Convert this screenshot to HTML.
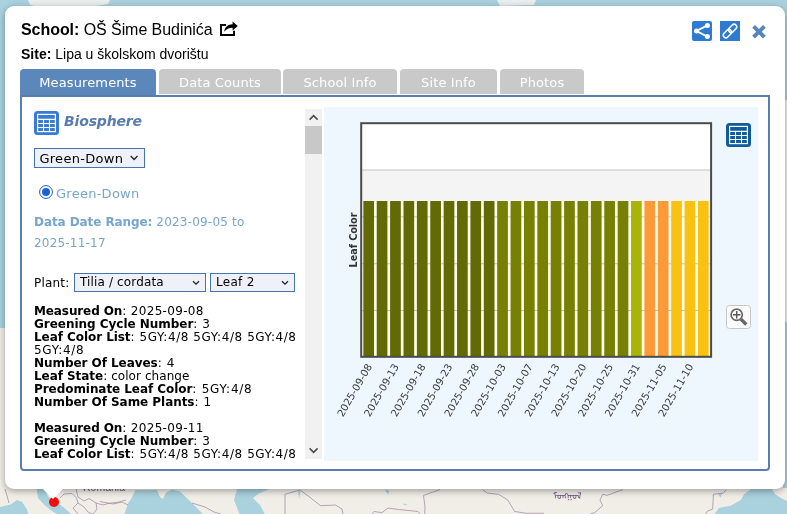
<!DOCTYPE html>
<html lang="hr">
<head>
<meta charset="utf-8">
<title>GLOBE Visualization - OŠ Šime Budinića</title>
<style>
  html, body { margin: 0; padding: 0; }
  body {
    width: 787px; height: 514px; overflow: hidden; position: relative;
    background: #f1eee8;
    font-family: "DejaVu Sans", "Liberation Sans", sans-serif;
  }
  .abs { position: absolute; }
  body > div, body > svg { will-change: transform; }
  #map { position: absolute; left: 0; top: 0; width: 787px; height: 514px; }
  #popup {
    position: absolute; left: 5px; top: 6px; width: 780px; height: 483px;
    background: #fff; border-radius: 9px;
    box-shadow: 0 2px 7px rgba(0,0,0,0.35);
  }
  #tail {
    position: absolute; left: 43px; top: 488.5px; width: 0; height: 0;
    border-left: 10.5px solid transparent; border-right: 10.5px solid transparent;
    border-top: 10.8px solid #fff;
  }
  #dot {
    position: absolute; left: 48.7px; top: 497.2px; width: 10px; height: 10px;
    border-radius: 50%; background: #f40d0d;
  }
  #school {
    position: absolute; left: 21px; top: 21px; white-space: nowrap;
    font: 16px/18px "Liberation Sans", sans-serif; color: #000; letter-spacing: -0.06px;
  }
  #site {
    position: absolute; left: 21px; top: 46px; white-space: nowrap;
    font: 14px/16px "Liberation Sans", sans-serif; color: #000;
  }
  .tab {
    position: absolute; top: 69px; height: 25px; border-radius: 4px 4px 0 0; letter-spacing: 0.12px;
    background: #c9c9c9; color: #fff; text-align: center;
    font: 13px/27px "DejaVu Sans", sans-serif;
  }
  .tab.active { background: #5b87ba; height: 27px; }
  #panel {
    position: absolute; left: 20px; top: 95px; width: 746px; height: 372px;
    border: 2px solid #5a7dab; border-radius: 0 0 4px 4px; background: #fff;
  }
  #scroller {
    position: absolute; left: 28px; top: 109px; width: 277px; height: 350px;
    overflow: hidden; color: #000;
    font: 13px/13px "DejaVu Sans", sans-serif;
  }
  #sbar { position: absolute; left: 305px; top: 109px; width: 17px; height: 350px; background: #f1f1f1; }
  #thumb { position: absolute; left: 305px; top: 126px; width: 17px; height: 28px; background: #c8c8c8; }
  #chartbg { position: absolute; left: 324px; top: 107px; width: 434px; height: 354px; background: #eef6fe; }
  .sel {
    position: absolute; box-sizing: border-box; height: 20px;
    border: 1px solid #4674ad; background: #eef2f8; color: #000;
    font: 13px/18px "DejaVu Sans", sans-serif; padding-left: 4px; white-space: nowrap;
  }
  .blue { color: #78a5cf; }
  .t12 { font: 12px/13px "DejaVu Sans", sans-serif; letter-spacing: 0.2px; }
  .t12 b { font-weight: bold; letter-spacing: -0.08px; }
</style>
</head>
<body>

<svg id="map" viewBox="0 0 787 514">
  <rect x="0" y="0" width="787" height="514" fill="#f1eee8"/>
  <!-- top strip water -->
  <rect x="0" y="0" width="787" height="12" fill="#a9d1de"/>
  <rect x="0" y="0" width="8" height="328" fill="#a9d1de"/>
  <rect x="783" y="0" width="4" height="100" fill="#a9d1de"/>
  <rect x="783" y="103" width="4" height="219" fill="#eeeeec"/>
  <rect x="783" y="322" width="4" height="166" fill="#a9d1de"/>
  <path d="M28 0 L110 0 L108 4 L90 7 L40 7 L30 5 Z" fill="#e9eeee"/>
  <path d="M497 0 L536 0 L534 5 L500 6 Z" fill="#e9eeee"/>
  <!-- Tyrrhenian / Ligurian -->
  <path d="M0 507 L10.7 504.5 L17 500 L22 501.8 L26.7 509 L28.5 514 L0 514 Z" fill="#a9d1de"/>
  <!-- Adriatic -->
  <path d="M36.5 489 L44.5 489 L48 496.5 L58.7 503.6 L67.6 510.7 L71 514 L57 514 L51.6 510.7 L44.5 505 L38 498 Z" fill="#a9d1de"/>
  <!-- Black sea -->
  <path d="M124.5 514 L128 503.6 L131.7 498 L135.5 490 L157 490 L160 497 L163 499 L166 492.5 L172 489.5 L180 491.4 L192 503 L203 514 Z" fill="#a9d1de"/>
  <!-- Caspian -->
  <path d="M237 489 L234 500 L239.5 514 L264.7 514 L260 505 L253 498 L258 494 L269 489 Z" fill="#a9d1de"/>
  <!-- small lakes -->
  <path d="M298 491.5 L300.4 490.6 L299.2 499 Z" fill="#a9d1de"/>
  <path d="M384.6 489.8 L389.4 490.4 L388.2 494.4 Z" fill="#a9d1de"/>
  <path d="M403 503.4 L408 504.4 L404 505.2 Z" fill="#a9d1de"/>
  <path d="M718 493 L722.5 493 L720.3 497.7 Z" fill="#a9d1de"/>
  <!-- far east sea -->
  <path d="M751 489 L744 494.3 L740.8 500 L730.5 505.7 L719 508 L714.5 514 L787 514 L787 501 L781 498 L775 494 L771.7 489 Z" fill="#a9d1de"/>
  <!-- borders -->
  <g fill="none" stroke="#a48fa6" stroke-width="0.8" stroke-linejoin="round">
    <path d="M5 489 L7.6 498 L9 503"/>
    <path d="M60 498 L64 494 L72 493.5 L76.5 498 L78 503 L73 508 L78 514"/>
    <path d="M76 489 L78 497 L84 501 L89 498.5 L96 503 L103 505 L108 503.5 L119 502 L126 500"/>
    <path d="M78 503 L84 507 L88 512 L92 514"/>
    <path d="M96 503 L97 509 L93 514"/>
    <path d="M100 501.5 L113 504 L122 502 L128 505"/>
    <path d="M192 503 L205 507 L214 512 L221 514"/>
    <path d="M285 514 L285 494.3 L300 490 L309 496.6 L320.6 505.7 L335.5 505 L342 509 L343 514"/>
    <path d="M372 514 L374 511.5 L382 512.6 L388 508 L399.5 509.6 L418 511.5 L420 514"/>
    <path d="M440 489.7 L423.5 495.4 L425 507 L424.7 514"/>
    <path d="M482.6 489.7 L487 493 L498.6 494.3 L507.8 500 L514.6 511.4 L526 513.3 L544 513.3"/>
    <path d="M623 489.7 L616 492 L607 495.4 L602.7 494.3 L600 500 L602.7 505.7 L594.7 512.6 L590 514"/>
    <path d="M726 489.7 L723.6 493 L713.4 494.3 L712.7 509 L707.6 511 L705.4 514"/>
  </g>
  <text x="83" y="491.2" font-family="Liberation Sans, sans-serif" font-size="10.5" fill="#6b5a75">România</text>
  <text x="553" y="498.5" font-family="Noto Sans Mongolian, DejaVu Sans, sans-serif" font-size="9" fill="#6a4f7a">ᠮᠣᠩᠭᠣᠯ</text>
</svg>

<div id="popup"></div>
<div id="dot"></div>
<div id="tail"></div>

<div id="school"><b>School:</b> OŠ Šime Budinića</div>
<svg class="abs" style="left:219px;top:20px" width="20" height="18" viewBox="0 0 20 18">
  <path d="M15.05 10.7 V15 H2 V5 H7.1" fill="none" stroke="#000" stroke-width="1.9"/>
  <path d="M5.3 11.8 C5.5 7.3 8.6 4.5 13.6 4.3 V1.6 L18.8 6 L13.6 10.4 V7.8 C10 7.8 7.3 8.9 5.3 11.8 Z" fill="#000"/>
</svg>
<div id="site"><b>Site:</b> Lipa u školskom dvorištu</div>

<!-- header icons -->
<svg class="abs" style="left:692px;top:21px" width="20" height="20" viewBox="0 0 20 20">
  <rect x="0" y="0" width="20" height="20" rx="2" fill="#2d7ad3"/>
  <path d="M15.4 4.4 L4.5 10 L15.4 15.6" fill="none" stroke="#fff" stroke-width="1.9"/>
  <circle cx="15.4" cy="4.4" r="2.5" fill="#fff"/>
  <circle cx="4.5" cy="10" r="2.5" fill="#fff"/>
  <circle cx="15.4" cy="15.6" r="2.5" fill="#fff"/>
</svg>
<svg class="abs" style="left:720px;top:21px" width="20" height="20" viewBox="0 0 20 20">
  <rect x="0" y="0" width="20" height="20" fill="#2d7ad3"/>
  <g transform="rotate(-45 10 10)" fill="none" stroke="#fff" stroke-width="1.5">
    <rect x="1.6" y="7.4" width="9.4" height="5.2" rx="2.6"/>
    <rect x="9" y="7.4" width="9.4" height="5.2" rx="2.6"/>
  </g>
</svg>
<svg class="abs" style="left:751px;top:24px" width="16" height="16" viewBox="0 0 16 16">
  <path d="M2.6 2.4 L13.4 13.2 M13.4 2.4 L2.6 13.2" stroke="#5585bc" stroke-width="3.9" fill="none"/>
</svg>

<!-- tabs -->
<div class="tab active" style="left:20px;width:136px">Measurements</div>
<div class="tab" style="left:159px;width:122px">Data Counts</div>
<div class="tab" style="left:283px;width:114px">School Info</div>
<div class="tab" style="left:400px;width:97px">Site Info</div>
<div class="tab" style="left:500px;width:84px">Photos</div>

<div id="panel"></div>
<div id="chartbg"></div>
<div id="sbar"></div>
<div id="thumb"></div>
<svg class="abs" style="left:305px;top:109px" width="17" height="17" viewBox="0 0 17 17">
  <path d="M4.6 10.6 L8.6 6.6 L12.6 10.6" fill="none" stroke="#4d4d4d" stroke-width="1.6"/>
</svg>
<svg class="abs" style="left:305px;top:442px" width="17" height="17" viewBox="0 0 17 17">
  <path d="M4.6 6.4 L8.6 10.4 L12.6 6.4" fill="none" stroke="#4d4d4d" stroke-width="1.6"/>
</svg>

<!-- left content -->
<svg class="abs" style="left:34px;top:111px" width="25" height="24" viewBox="0 0 25 24">
  <rect x="0" y="0" width="25" height="24" rx="3.5" fill="#3a7bd3"/>
  <rect x="3.6" y="3.4" width="17.8" height="17.2" fill="none" stroke="#fff" stroke-width="1.2"/>
  <g stroke="#fff" stroke-width="1.1">
    <path d="M3.6 8.4 H21.4 M3.6 12.5 H21.4 M3.6 16.5 H21.4"/>
    <path d="M9.5 8.4 V20.6 M15.5 8.4 V20.6"/>
  </g>
</svg>
<div class="abs" style="left:64px;top:111px;font:italic bold 14px/20px 'DejaVu Sans',sans-serif;letter-spacing:-0.15px;color:#5a7bb0;white-space:nowrap">Biosphere</div>

<div class="sel" style="left:34px;top:148px;width:111px;padding-left:4.4px;line-height:20px;letter-spacing:0.3px">Green-Down</div>
<svg class="abs" style="left:128px;top:153px" width="12" height="10" viewBox="0 0 12 10">
  <path d="M2.7 3.1 L6.1 6.5 L9.5 3.1" fill="none" stroke="#222" stroke-width="1.35"/>
</svg>

<svg class="abs" style="left:38px;top:184px" width="16" height="16" viewBox="0 0 16 16">
  <circle cx="8" cy="8" r="6.4" fill="#fff" stroke="#1d58c4" stroke-width="1"/>
  <circle cx="8" cy="8" r="4" fill="#1a60d2"/>
</svg>
<div class="abs blue" style="left:56px;top:185.5px;letter-spacing:0.26px;font:13px/16px 'DejaVu Sans',sans-serif;white-space:nowrap">Green-Down</div>

<div class="abs blue t12" style="left:34px;top:212px;width:260px;line-height:21px"><b>Data Date Range:</b> 2023-09-05 to<br>2025-11-17</div>

<div class="abs t12" style="left:34px;top:274px;line-height:18px;white-space:nowrap">Plant:</div>
<div class="sel" style="left:74px;top:273px;width:132px;height:19px;line-height:17.6px;font-size:12px;padding-left:5px;letter-spacing:0.14px">Tilia / cordata</div>
<svg class="abs" style="left:190.2px;top:277.6px" width="12" height="10" viewBox="0 0 12 10">
  <path d="M3 3.2 L6 6.2 L9 3.2" fill="none" stroke="#222" stroke-width="1.3"/>
</svg>
<div class="sel" style="left:210px;top:273px;width:85px;height:19px;line-height:17.6px;font-size:12px;padding-left:5px;letter-spacing:0.3px">Leaf 2</div>
<svg class="abs" style="left:279px;top:277.6px" width="12" height="10" viewBox="0 0 12 10">
  <path d="M3 3.2 L6 6.2 L9 3.2" fill="none" stroke="#222" stroke-width="1.3"/>
</svg>

<div class="abs d t12" style="left:34px;top:305px;width:272px;line-height:13px;color:#000;white-space:pre"><b style="letter-spacing:-0.11px">Measured On</b><span style="letter-spacing:0.33px">: 2025-09-08</span><br><b style="letter-spacing:-0.03px">Greening Cycle Number</b><span style="letter-spacing:0.6px">: 3</span><br><b style="letter-spacing:-0.06px">Leaf Color List</b><span style="letter-spacing:0.57px">: 5GY:4/8 5GY:4/8 5GY:4/8</span><br><span style="letter-spacing:0.72px">5GY:4/8</span><br><b style="letter-spacing:-0.05px">Number Of Leaves</b><span style="letter-spacing:0.6px">: 4</span><br><b style="letter-spacing:-0.05px">Leaf State</b><span style="letter-spacing:0.07px">: color change</span><br><b style="letter-spacing:-0.06px">Predominate Leaf Color</b><span style="letter-spacing:0.77px">: 5GY:4/8</span><br><b style="letter-spacing:-0.05px">Number Of Same Plants</b><span style="letter-spacing:0.6px">: 1</span><br><br><b style="letter-spacing:-0.11px">Measured On</b><span style="letter-spacing:0.33px">: 2025-09-11</span><br><b style="letter-spacing:-0.03px">Greening Cycle Number</b><span style="letter-spacing:0.6px">: 3</span><br><b style="letter-spacing:-0.06px">Leaf Color List</b><span style="letter-spacing:0.57px">: 5GY:4/8 5GY:4/8 5GY:4/8</span></div>


<!-- chart side buttons -->
<svg class="abs" style="left:726px;top:123px" width="25" height="24" viewBox="0 0 25 24">
  <rect x="0" y="0" width="25" height="24" rx="3.5" fill="#0f5b9b"/>
  <rect x="3.6" y="3.4" width="17.8" height="17.2" fill="none" stroke="#fff" stroke-width="1.2"/>
  <g stroke="#fff" stroke-width="1.1">
    <path d="M3.6 8.4 H21.4 M3.6 12.5 H21.4 M3.6 16.5 H21.4"/>
    <path d="M9.5 8.4 V20.6 M15.5 8.4 V20.6"/>
  </g>
</svg>
<svg class="abs" style="left:726px;top:305px" width="25" height="24" viewBox="0 0 25 24">
  <rect x="0.5" y="0.5" width="24" height="23" rx="3" fill="#fbfbfb" stroke="#c6c6c6" stroke-width="1"/>
  <circle cx="10.7" cy="9.8" r="5.6" fill="none" stroke="#666" stroke-width="1.7"/>
  <path d="M7 9.8 H14.4 M10.7 6.1 V13.5" stroke="#555" stroke-width="1.4"/>
  <path d="M14.9 14.1 L20.3 19.5" stroke="#666" stroke-width="3.4"/>
</svg>

<!-- chart -->
<svg class="abs" id="chart" style="left:324px;top:107px" width="434" height="354" viewBox="324 107 434 354">
  <rect x="361.2" y="123.2" width="349.90" height="233.60" fill="#ffffff"/>
  <rect x="361.2" y="170.04" width="349.90" height="46.84" fill="#f4f4f4"/>
  <path d="M361.2 170.04 H711.1" stroke="#c4c4c4" stroke-width="1"/>
  <rect x="361.2" y="201.0" width="349.90" height="155.80" fill="#fffff0"/>
  <rect x="361.2" y="263.72" width="349.90" height="46.84" fill="#fff9ea"/>
  <path d="M361.2 216.88 H711.1" stroke="#c9c4b0" stroke-width="1"/>
  <path d="M361.2 263.72 H711.1" stroke="#c9c4b0" stroke-width="1"/>
  <path d="M361.2 310.56 H711.1" stroke="#c9c4b0" stroke-width="1"/>
  <rect x="363.34" y="201.0" width="10.71" height="155.80" fill="#626a06"/>
  <rect x="376.72" y="201.0" width="10.71" height="155.80" fill="#626a06"/>
  <rect x="390.11" y="201.0" width="10.71" height="155.80" fill="#626a06"/>
  <rect x="403.49" y="201.0" width="10.71" height="155.80" fill="#626a06"/>
  <rect x="416.88" y="201.0" width="10.71" height="155.80" fill="#626a06"/>
  <rect x="430.26" y="201.0" width="10.71" height="155.80" fill="#626a06"/>
  <rect x="443.65" y="201.0" width="10.71" height="155.80" fill="#626a06"/>
  <rect x="457.03" y="201.0" width="10.71" height="155.80" fill="#626a06"/>
  <rect x="470.42" y="201.0" width="10.71" height="155.80" fill="#626a06"/>
  <rect x="483.80" y="201.0" width="10.71" height="155.80" fill="#626a06"/>
  <rect x="497.18" y="201.0" width="10.71" height="155.80" fill="#788004"/>
  <rect x="510.57" y="201.0" width="10.71" height="155.80" fill="#788004"/>
  <rect x="523.95" y="201.0" width="10.71" height="155.80" fill="#788004"/>
  <rect x="537.34" y="201.0" width="10.71" height="155.80" fill="#788004"/>
  <rect x="550.72" y="201.0" width="10.71" height="155.80" fill="#788004"/>
  <rect x="564.11" y="201.0" width="10.71" height="155.80" fill="#788004"/>
  <rect x="577.49" y="201.0" width="10.71" height="155.80" fill="#788004"/>
  <rect x="590.88" y="201.0" width="10.71" height="155.80" fill="#788004"/>
  <rect x="604.26" y="201.0" width="10.71" height="155.80" fill="#788004"/>
  <rect x="617.65" y="201.0" width="10.71" height="155.80" fill="#788004"/>
  <rect x="631.03" y="201.0" width="10.71" height="155.80" fill="#a8b508"/>
  <rect x="644.42" y="201.0" width="10.71" height="155.80" fill="#fb9a36"/>
  <rect x="657.80" y="201.0" width="10.71" height="155.80" fill="#fb9a36"/>
  <rect x="671.18" y="201.0" width="10.71" height="155.80" fill="#f9c112"/>
  <rect x="684.57" y="201.0" width="10.71" height="155.80" fill="#f9c112"/>
  <rect x="697.95" y="201.0" width="10.71" height="155.80" fill="#f9c112"/>
  <rect x="361.2" y="123.2" width="349.90" height="233.60" fill="none" stroke="#4a4a4a" stroke-width="2"/>
  <text transform="translate(357 240) rotate(-90)" text-anchor="middle" font-family="DejaVu Sans, sans-serif" font-weight="bold" font-size="9.6" fill="#333">Leaf Color</text>
  <text transform="translate(372.49 366.3) rotate(-60)" text-anchor="end" font-family="DejaVu Sans, sans-serif" font-size="10.2" fill="#3a3a3a">2025-09-08</text>
  <text transform="translate(399.26 366.3) rotate(-60)" text-anchor="end" font-family="DejaVu Sans, sans-serif" font-size="10.2" fill="#3a3a3a">2025-09-13</text>
  <text transform="translate(426.03 366.3) rotate(-60)" text-anchor="end" font-family="DejaVu Sans, sans-serif" font-size="10.2" fill="#3a3a3a">2025-09-18</text>
  <text transform="translate(452.80 366.3) rotate(-60)" text-anchor="end" font-family="DejaVu Sans, sans-serif" font-size="10.2" fill="#3a3a3a">2025-09-23</text>
  <text transform="translate(479.57 366.3) rotate(-60)" text-anchor="end" font-family="DejaVu Sans, sans-serif" font-size="10.2" fill="#3a3a3a">2025-09-28</text>
  <text transform="translate(506.34 366.3) rotate(-60)" text-anchor="end" font-family="DejaVu Sans, sans-serif" font-size="10.2" fill="#3a3a3a">2025-10-03</text>
  <text transform="translate(533.11 366.3) rotate(-60)" text-anchor="end" font-family="DejaVu Sans, sans-serif" font-size="10.2" fill="#3a3a3a">2025-10-07</text>
  <text transform="translate(559.88 366.3) rotate(-60)" text-anchor="end" font-family="DejaVu Sans, sans-serif" font-size="10.2" fill="#3a3a3a">2025-10-13</text>
  <text transform="translate(586.65 366.3) rotate(-60)" text-anchor="end" font-family="DejaVu Sans, sans-serif" font-size="10.2" fill="#3a3a3a">2025-10-20</text>
  <text transform="translate(613.42 366.3) rotate(-60)" text-anchor="end" font-family="DejaVu Sans, sans-serif" font-size="10.2" fill="#3a3a3a">2025-10-25</text>
  <text transform="translate(640.18 366.3) rotate(-60)" text-anchor="end" font-family="DejaVu Sans, sans-serif" font-size="10.2" fill="#3a3a3a">2025-10-31</text>
  <text transform="translate(666.95 366.3) rotate(-60)" text-anchor="end" font-family="DejaVu Sans, sans-serif" font-size="10.2" fill="#3a3a3a">2025-11-05</text>
  <text transform="translate(693.72 366.3) rotate(-60)" text-anchor="end" font-family="DejaVu Sans, sans-serif" font-size="10.2" fill="#3a3a3a">2025-11-10</text>
</svg>

</body>
</html>
